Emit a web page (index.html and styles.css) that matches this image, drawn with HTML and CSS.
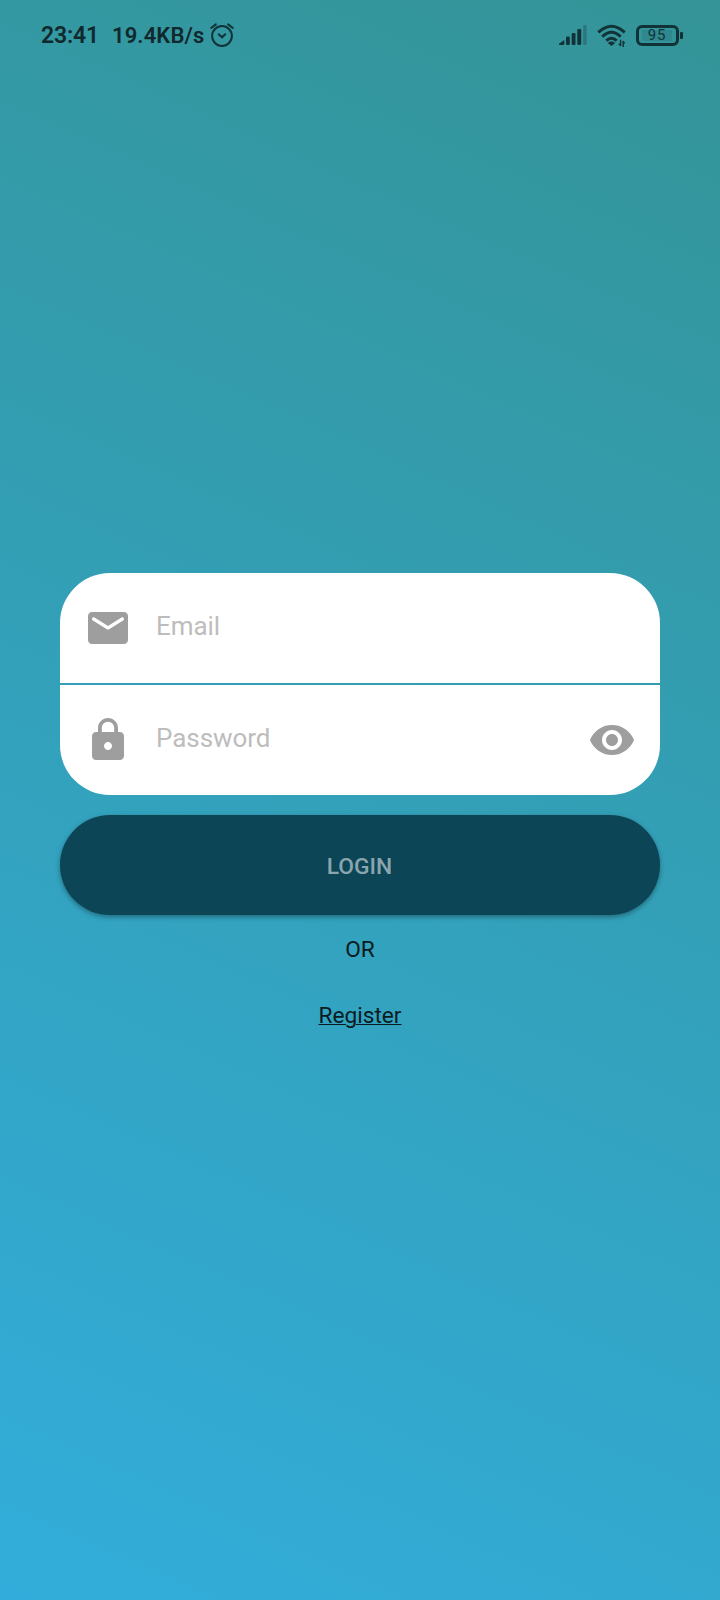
FILE: index.html
```html
<!DOCTYPE html>
<html lang="en">
<head>
<meta charset="utf-8">
<title>Login</title>
<link rel="stylesheet" href="styles.css">
</head>
<body>
<div class="screen">
  <header class="status">
    <span class="clock">23:41</span>
    <span class="speed">19.4KB/s</span>
    <svg class="alarm" width="24" height="24" viewBox="0 0 24 24" fill="none" stroke="currentColor" stroke-width="2" stroke-linecap="round"><circle cx="12" cy="13" r="9.9"/><path d="M8.7 11.3 12 14.3l3.3-3"/><path d="M1.2 5 5.8 1.4M22.8 5 18.2 1.4" stroke-width="2"/></svg>
    <svg class="signal" width="28" height="21" viewBox="0 0 28 21" fill="currentColor"><path d="M0 20v-1.3L5.3 15v4a1 1 0 0 1-1 1z"/><rect x="7" y="11.5" width="3.8" height="8.5" rx="1.2"/><rect x="12.7" y="8" width="3.8" height="12" rx="1.2"/><rect x="18.3" y="4" width="3.9" height="16" rx="1.2"/><rect x="24.2" y="0" width="3.4" height="20" rx="1" opacity=".3"/></svg>
    <svg class="wifi" width="30" height="24" viewBox="0 0 30 24" fill="none" stroke="currentColor" stroke-width="3"><path d="M1.3 8.3Q14.5-3.8 27.7 8.3M5.3 12.6Q14.5 4 23.7 12.6M9.3 16.7Q14.5 11.8 19.7 16.7"/><path d="M10.8 19q3.7-2.8 7.4 0L14.5 22z" fill="currentColor" stroke="none"/><path d="M23.6 15.8v6.2M26.2 17v6M23.8 21.8l-2-2M25.8 17.2l2 2" stroke-width="1.4"/></svg>
    <div class="battery"><span class="level">95</span></div>
  </header>
  <main class="login">
    <form class="fields">
      <label class="field">
        <svg width="48" height="48" viewBox="0 0 24 24" fill="currentColor"><path d="M20 4H4c-1.1 0-1.99.9-1.99 2L2 18c0 1.1.9 2 2 2h16c1.1 0 2-.9 2-2V6c0-1.1-.9-2-2-2zm-.4 4.25-7.07 4.42c-.32.2-.74.2-1.06 0L4.4 8.25c-.25-.16-.4-.43-.4-.72 0-.67.73-1.07 1.3-.72L12 11l6.7-4.19c.57-.35 1.3.05 1.3.72 0 .29-.15.56-.4.72z"/></svg>
        <span class="hint">Email</span>
      </label>
      <label class="field">
        <svg width="48" height="48" viewBox="0 0 24 24" fill="currentColor"><path d="M18 8h-1V6c0-2.76-2.24-5-5-5S7 3.24 7 6v2H6c-1.1 0-2 .9-2 2v10c0 1.1.9 2 2 2h12c1.1 0 2-.9 2-2V10c0-1.1-.9-2-2-2zm-6 9c-1.1 0-2-.9-2-2s.9-2 2-2 2 .9 2 2-.9 2-2 2zM8.9 8V6c0-1.71 1.39-3.1 3.1-3.1s3.1 1.39 3.1 3.1v2z"/></svg>
        <span class="hint">Password</span>
        <svg width="48" height="48" viewBox="0 0 24 24" fill="currentColor"><path d="M12 4.5C7 4.5 2.73 7.61 1 12c1.73 4.39 6 7.5 11 7.5s9.27-3.11 11-7.5c-1.73-4.39-6-7.5-11-7.5zM12 17c-2.76 0-5-2.24-5-5s2.24-5 5-5 5 2.24 5 5-2.24 5-5 5zm0-8c-1.66 0-3 1.34-3 3s1.34 3 3 3 3-1.34 3-3-1.34-3-3-3z"/></svg>
      </label>
    </form>
    <button class="submit" type="button">LOGIN</button>
    <p class="or">OR</p>
    <a class="register">Register</a>
  </main>
</div>
</body>
</html>
```
FILE: styles.css
```css
body {
  margin: 0;
  font-family: Roboto, sans-serif;
}
.screen {
  box-sizing: border-box;
  width: 720px;
  height: 1600px;
  overflow: hidden;
  background: linear-gradient(24.23deg, #32addb, #349497);
}
.status {
  box-sizing: border-box;
  display: flex;
  align-items: center;
  height: 70px;
  padding: 0 37px 0 41px;
  color: #113338;
}
.clock, .speed {
  padding-top: 2px;
  font-weight: 600;
  line-height: 26px;
  color: #10292d;
  white-space: nowrap;
}
.clock {
  width: 71px;
  font-size: 23px;
  letter-spacing: -0.2px;
}
.speed {
  width: 97.5px;
  font-size: 22px;
  letter-spacing: 0.1px;
}
.signal {
  margin-left: auto;
}
.wifi {
  margin: 2px 9px 0 10px;
}
.battery {
  position: relative;
  box-sizing: border-box;
  width: 43px;
  height: 21px;
  margin-right: 4px;
  padding: 2px;
  border: 3px solid #113338;
  border-radius: 6px;
}
.battery::after {
  content: "";
  position: absolute;
  top: 4px;
  right: -7px;
  width: 3px;
  height: 7px;
  border-radius: 1px;
  background: #113338;
}
.level {
  display: block;
  width: 30px;
  height: 11px;
  margin-left: 1px;
  background: rgba(17, 51, 56, 0.12);
  font-size: 15px;
  font-weight: 400;
  line-height: 11px;
  letter-spacing: 0.7px;
  text-align: center;
}
.login {
  display: flex;
  flex-direction: column;
  align-items: center;
  padding: 503px 60px 0;
}
.fields {
  display: flex;
  flex-direction: column;
  gap: 2px;
  width: 100%;
}
.field {
  box-sizing: border-box;
  display: flex;
  align-items: center;
  height: 110px;
  padding: 0 24px;
  background: #fff;
  color: #9e9e9e;
}
.field:first-child {
  border-radius: 50px 50px 0 0;
}
.field:last-child {
  border-radius: 0 0 50px 50px;
}
.hint {
  flex: 1;
  margin: -4px 0 0 24px;
  font-size: 26px;
  line-height: 30px;
  letter-spacing: -0.05px;
  color: #bdbdbd;
}
.submit {
  width: 100%;
  height: 100px;
  margin-top: 20px;
  padding: 4px 1px 0 0;
  border: 0;
  border-radius: 50px;
  background: #0b4556;
  box-shadow: 0 2px 5px rgba(0, 0, 0, 0.35);
  color: #8aa5ae;
  font: 500 22.8px/26px Roboto, sans-serif;
}
.or, .register {
  font-size: 22.7px;
  line-height: 26px;
  color: #0a1c20;
}
.or {
  margin: 22px 0 40px;
}
.register {
  text-decoration: underline;
  text-decoration-thickness: 1px;
  text-underline-offset: 1px;
}
```
